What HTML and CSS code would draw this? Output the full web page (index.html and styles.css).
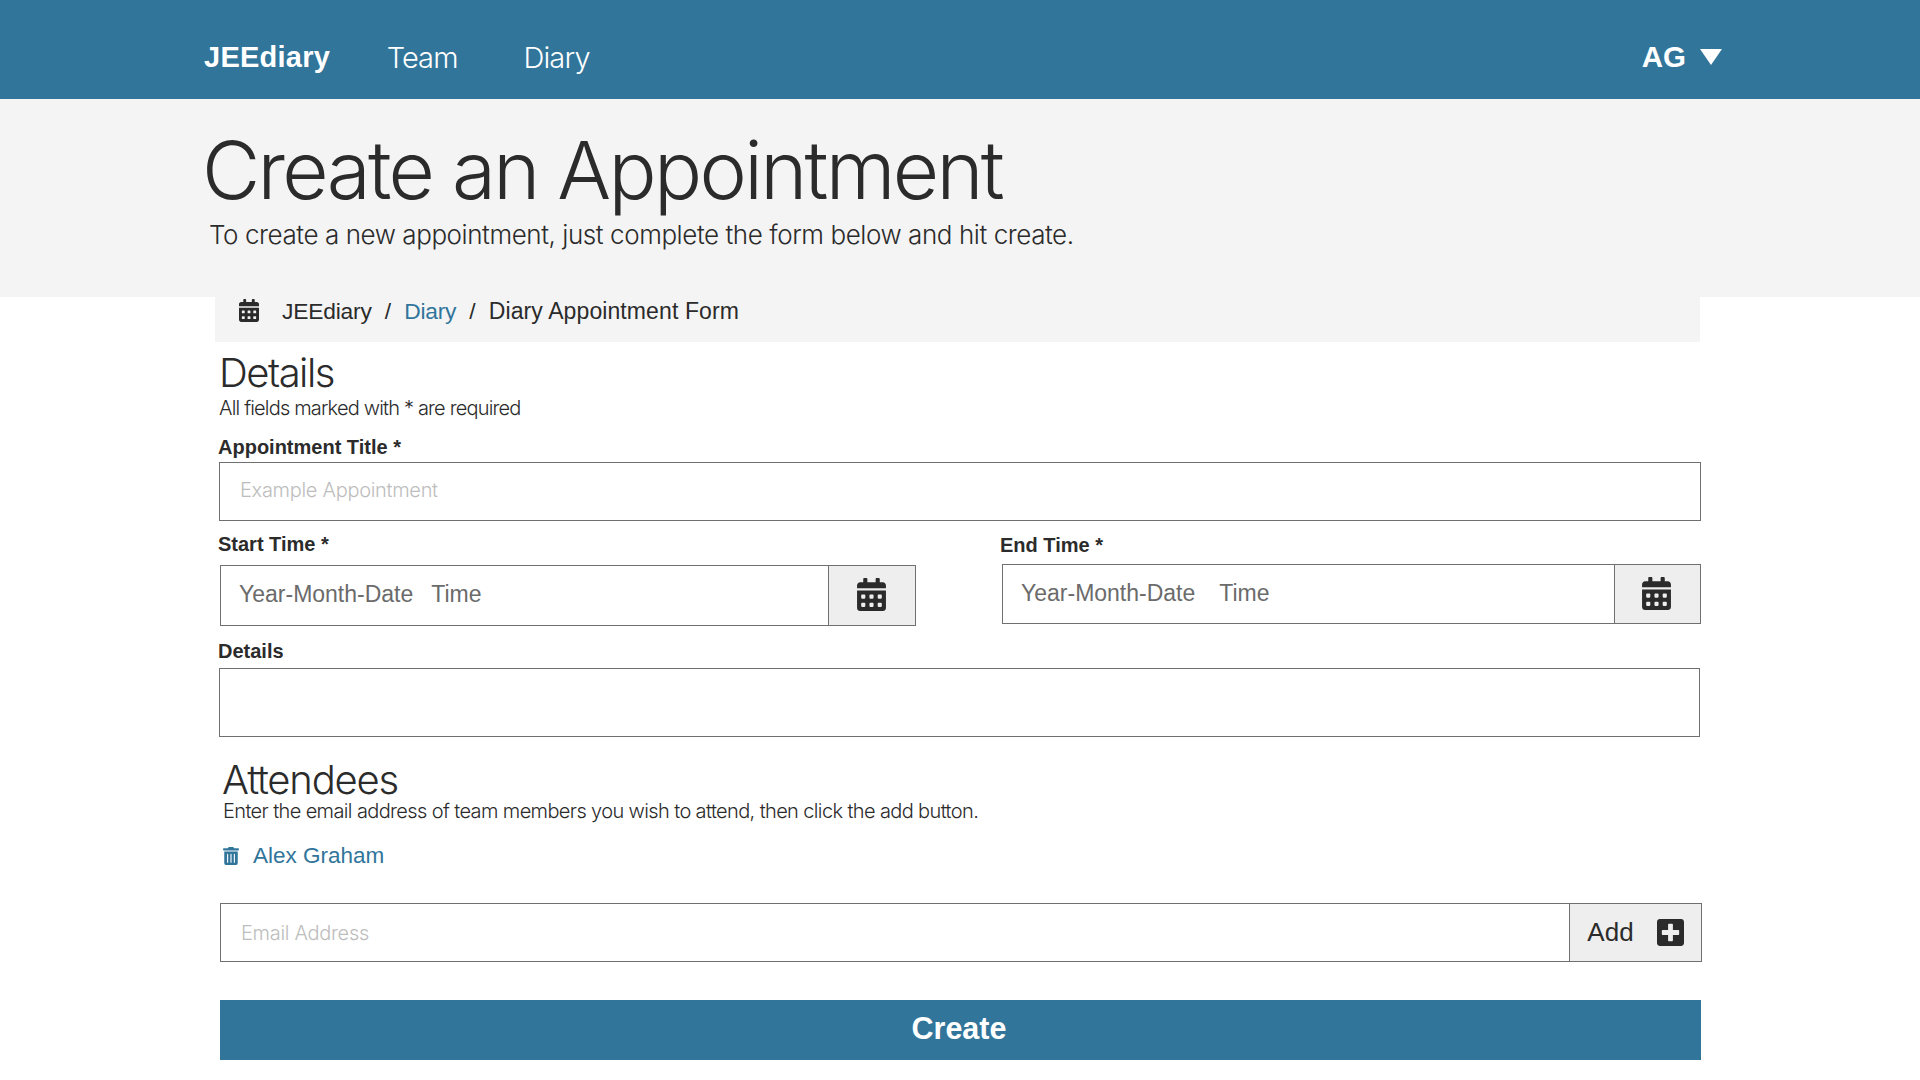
FILE: index.html
```html
<!DOCTYPE html>
<html lang="en">
<head>
<meta charset="utf-8">
<title>Create an Appointment</title>
<link rel="stylesheet" href="styles.css">
</head>
<body>
<header class="topbar">
  <nav class="nav">
    <a class="brand">JEEdiary</a>
    <a class="nav-link">Team</a>
    <a class="nav-link">Diary</a>
  </nav>
  <div class="user"><span>AG</span><span class="caret"></span></div>
</header>
<section class="hero">
  <h1>Create an Appointment</h1>
  <p>To create a new appointment, just complete the form below and hit create.</p>
</section>
<nav class="crumbs">
  <svg class="crumb-icon" viewBox="0 0 448 512"><path d="M0 464c0 26.5 21.5 48 48 48h352c26.5 0 48-21.5 48-48V192H0v272zm320-196c0-6.6 5.4-12 12-12h40c6.6 0 12 5.4 12 12v40c0 6.6-5.4 12-12 12h-40c-6.6 0-12-5.4-12-12v-40zm0 128c0-6.6 5.4-12 12-12h40c6.6 0 12 5.4 12 12v40c0 6.6-5.4 12-12 12h-40c-6.6 0-12-5.4-12-12v-40zM192 268c0-6.6 5.4-12 12-12h40c6.6 0 12 5.4 12 12v40c0 6.6-5.4 12-12 12h-40c-6.6 0-12-5.4-12-12v-40zm0 128c0-6.6 5.4-12 12-12h40c6.6 0 12 5.4 12 12v40c0 6.6-5.4 12-12 12h-40c-6.6 0-12-5.4-12-12v-40zM64 268c0-6.6 5.4-12 12-12h40c6.6 0 12 5.4 12 12v40c0 6.6-5.4 12-12 12H76c-6.6 0-12-5.4-12-12v-40zm0 128c0-6.6 5.4-12 12-12h40c6.6 0 12 5.4 12 12v40c0 6.6-5.4 12-12 12H76c-6.6 0-12-5.4-12-12v-40zM400 64h-48V16c0-8.8-7.2-16-16-16h-32c-8.8 0-16 7.2-16 16v48H160V16c0-8.8-7.2-16-16-16h-32c-8.8 0-16 7.2-16 16v48H48C21.5 64 0 85.5 0 112v48h448v-48c0-26.5-21.5-48-48-48z"/></svg>
  <span class="crumb-root">JEEdiary</span><span class="sep">/</span><a class="link">Diary</a><span class="sep">/</span><span class="crumb-current">Diary Appointment Form</span>
</nav>
<main class="form">
  <h2 class="section-title">Details</h2>
  <p class="section-note details-note">All fields marked with * are required</p>
  <label class="field-label label-title">Appointment Title *</label>
  <input class="text-input input-title" placeholder="Example Appointment">
  <div class="time-row">
    <div class="time-col start-col">
      <label class="field-label">Start Time *</label>
      <div class="group start-group">
        <div class="time-value"><span>Year-Month-Date</span><span class="time-word start-word">Time</span></div>
        <div class="addon cal-addon start-addon">
          <svg class="cal-icon" viewBox="0 0 448 512"><path d="M0 464c0 26.5 21.5 48 48 48h352c26.5 0 48-21.5 48-48V192H0v272zm320-196c0-6.6 5.4-12 12-12h40c6.6 0 12 5.4 12 12v40c0 6.6-5.4 12-12 12h-40c-6.6 0-12-5.4-12-12v-40zm0 128c0-6.6 5.4-12 12-12h40c6.6 0 12 5.4 12 12v40c0 6.6-5.4 12-12 12h-40c-6.6 0-12-5.4-12-12v-40zM192 268c0-6.6 5.4-12 12-12h40c6.6 0 12 5.4 12 12v40c0 6.6-5.4 12-12 12h-40c-6.6 0-12-5.4-12-12v-40zm0 128c0-6.6 5.4-12 12-12h40c6.6 0 12 5.4 12 12v40c0 6.6-5.4 12-12 12h-40c-6.6 0-12-5.4-12-12v-40zM64 268c0-6.6 5.4-12 12-12h40c6.6 0 12 5.4 12 12v40c0 6.6-5.4 12-12 12H76c-6.6 0-12-5.4-12-12v-40zm0 128c0-6.6 5.4-12 12-12h40c6.6 0 12 5.4 12 12v40c0 6.6-5.4 12-12 12H76c-6.6 0-12-5.4-12-12v-40zM400 64h-48V16c0-8.8-7.2-16-16-16h-32c-8.8 0-16 7.2-16 16v48H160V16c0-8.8-7.2-16-16-16h-32c-8.8 0-16 7.2-16 16v48H48C21.5 64 0 85.5 0 112v48h448v-48c0-26.5-21.5-48-48-48z"/></svg>
        </div>
      </div>
    </div>
    <div class="time-col end-col">
      <label class="field-label">End Time *</label>
      <div class="group end-group">
        <div class="time-value"><span>Year-Month-Date</span><span class="time-word end-word">Time</span></div>
        <div class="addon cal-addon end-addon">
          <svg class="cal-icon" viewBox="0 0 448 512"><path d="M0 464c0 26.5 21.5 48 48 48h352c26.5 0 48-21.5 48-48V192H0v272zm320-196c0-6.6 5.4-12 12-12h40c6.6 0 12 5.4 12 12v40c0 6.6-5.4 12-12 12h-40c-6.6 0-12-5.4-12-12v-40zm0 128c0-6.6 5.4-12 12-12h40c6.6 0 12 5.4 12 12v40c0 6.6-5.4 12-12 12h-40c-6.6 0-12-5.4-12-12v-40zM192 268c0-6.6 5.4-12 12-12h40c6.6 0 12 5.4 12 12v40c0 6.6-5.4 12-12 12h-40c-6.6 0-12-5.4-12-12v-40zm0 128c0-6.6 5.4-12 12-12h40c6.6 0 12 5.4 12 12v40c0 6.6-5.4 12-12 12h-40c-6.6 0-12-5.4-12-12v-40zM64 268c0-6.6 5.4-12 12-12h40c6.6 0 12 5.4 12 12v40c0 6.6-5.4 12-12 12H76c-6.6 0-12-5.4-12-12v-40zm0 128c0-6.6 5.4-12 12-12h40c6.6 0 12 5.4 12 12v40c0 6.6-5.4 12-12 12H76c-6.6 0-12-5.4-12-12v-40zM400 64h-48V16c0-8.8-7.2-16-16-16h-32c-8.8 0-16 7.2-16 16v48H160V16c0-8.8-7.2-16-16-16h-32c-8.8 0-16 7.2-16 16v48H48C21.5 64 0 85.5 0 112v48h448v-48c0-26.5-21.5-48-48-48z"/></svg>
        </div>
      </div>
    </div>
  </div>
  <label class="field-label label-details">Details</label>
  <textarea class="text-input details-box"></textarea>
  <h2 class="section-title attendees-title">Attendees</h2>
  <p class="section-note attendees-note">Enter the email address of team members you wish to attend, then click the add button.</p>
  <a class="attendee">
    <svg class="trash-icon" viewBox="0 0 448 512"><path d="M32 464a48 48 0 0 0 48 48h288a48 48 0 0 0 48-48V128H32zm272-256a16 16 0 0 1 32 0v224a16 16 0 0 1-32 0zm-96 0a16 16 0 0 1 32 0v224a16 16 0 0 1-32 0zm-96 0a16 16 0 0 1 32 0v224a16 16 0 0 1-32 0zM432 32H312l-9.4-18.7A24 24 0 0 0 281.1 0H166.8a23.72 23.72 0 0 0-21.4 13.3L136 32H16A16 16 0 0 0 0 48v32a16 16 0 0 0 16 16h416a16 16 0 0 0 16-16V48a16 16 0 0 0-16-16z"/></svg>
    <span>Alex Graham</span>
  </a>
  <div class="group email-group">
    <input class="email-input" placeholder="Email Address">
    <div class="addon add-addon">
      <span>Add</span>
      <svg class="plus-icon" viewBox="0 0 448 512"><path d="M400 32H48C21.5 32 0 53.5 0 80v352c0 26.5 21.5 48 48 48h352c26.5 0 48-21.5 48-48V80c0-26.5-21.5-48-48-48zm-32 252c0 6.6-5.4 12-12 12h-92v92c0 6.6-5.4 12-12 12h-56c-6.6 0-12-5.4-12-12v-92H92c-6.6 0-12-5.4-12-12v-56c0-6.6 5.4-12 12-12h92v-92c0-6.6 5.4-12 12-12h56c6.6 0 12 5.4 12 12v92h92c6.6 0 12 5.4 12 12v56z"/></svg>
    </div>
  </div>
  <button class="create">Create</button>
</main>
</body>
</html>
```
FILE: styles.css
```css
* { box-sizing: border-box; }
html, body { margin: 0; }
body {
  font-family: "Liberation Sans", Arial, sans-serif;
  color: #2b2b2b;
  background: #fff;
  height: 1080px;
  overflow: hidden;
}
.topbar {
  height: 99px;
  background: #31759b;
  color: #fff;
  display: flex;
  justify-content: space-between;
  padding: 16px 198px 0 204px;
}
.nav { display: flex; align-items: center; height: 83px; }
.brand { font-size: 29px; font-weight: 700; margin-right: 56.5px; letter-spacing: 0.25px; }
.nav-link { font-family: Inter, sans-serif; font-weight: 300; font-size: 29px; letter-spacing: -0.9px; margin-right: 66px; }
.user { display: flex; align-items: center; height: 82px; font-size: 29.5px; font-weight: 700; gap: 14px; }
.caret {
  width: 0; height: 0;
  border-left: 11px solid transparent;
  border-right: 11px solid transparent;
  border-top: 16px solid #fff;
}
.hero {
  height: 198px;
  background: #f4f4f4;
  padding: 26px 0 0 202px;
}
.hero h1 {
  margin: 0;
  font-family: Inter, sans-serif;
  font-weight: 270;
  font-size: 80px;
  letter-spacing: -2.7px;
  line-height: 90px;
}
.hero p {
  margin: 4px 0 0 7px;
  font-family: Inter, sans-serif;
  font-weight: 300;
  font-size: 26px;
  letter-spacing: -0.43px;
  line-height: 32px;
}
.crumbs {
  margin-left: 215px;
  width: 1485px;
  height: 45px;
  background: #f4f4f4;
  padding: 0 0 17px 24px;
  display: flex;
  align-items: center;
  font-size: 22.8px;
}
.crumb-icon { width: 20px; height: 23px; margin: 0 23px 2px 0; fill: #2b2b2b; }
.crumb-root { letter-spacing: -0.2px; }
.crumb-current { font-size: 23px; letter-spacing: 0.1px; }
.sep { margin: 0 13.2px; }
.link { color: #31759b; letter-spacing: -0.3px; }
.form { margin-left: 219px; width: 1482px; }
.section-title {
  margin: 7px 0 0;
  font-family: Inter, sans-serif;
  font-weight: 300;
  font-size: 40px;
  letter-spacing: -1.5px;
  line-height: 48px;
}
.section-note {
  margin: 0 0 0 1px;
  font-family: Inter, sans-serif;
  font-weight: 300;
  font-size: 20px;
  letter-spacing: -0.6px;
  line-height: 23px;
}
.details-note { letter-spacing: -0.82px; margin-left: 0; }
.field-label {
  display: block;
  font-size: 20px;
  font-weight: 700;
  line-height: 24px;
  margin-left: -1px;
}
.label-title { margin-top: 15px; margin-bottom: 3px; }
.text-input {
  display: block;
  width: 100%;
  border: 1.5px solid #707070;
  border-radius: 0;
  background: #fff;
  outline: none;
  font-family: Inter, sans-serif;
  font-weight: 300;
  font-size: 20px;
  letter-spacing: -0.3px;
  padding: 0 20px;
  resize: none;
}
.input-title { height: 59px; padding-bottom: 4px; }
.text-input::placeholder, .email-input::placeholder { color: #bdbdbd; opacity: 1; }
.time-row { display: flex; justify-content: space-between; margin-top: 11px; }
.start-col { width: 696px; margin-left: 1px; }
.end-col { width: 699px; margin-top: 1px; }
.start-col .field-label { margin-left: -2px; }
.end-col .field-label { margin-left: -2px; }
.group {
  display: flex;
  border: 1.5px solid #707070;
  background: #fff;
}
.start-group { height: 61px; margin-top: 9px; }
.end-group { height: 60px; margin-top: 7px; }
.time-value {
  flex: 1;
  display: flex;
  align-items: center;
  padding-left: 18px;
  padding-bottom: 2px;
  font-size: 23px;
  color: #6b6b6b;
}
.time-word { margin-left: 18px; }
.end-word { margin-left: 24px; }
.addon {
  background: #eee;
  border-left: 1.5px solid #707070;
  display: flex;
  align-items: center;
  justify-content: center;
}
.cal-addon { width: 87px; padding: 0 2px 2px 0; }
.end-addon { width: 86px; padding-right: 3px; }
.cal-icon { width: 29px; height: 33px; fill: #2b2b2b; }
.label-details { margin-top: 13px; }
.details-box { height: 69px; width: 1481px; margin-top: 5px; }
.attendees-title { margin: 22px 0 0 3px; line-height: 41px; letter-spacing: -1.2px; }
.attendees-note { margin-left: 4px; letter-spacing: -0.62px; }
.attendee {
  display: flex;
  align-items: center;
  margin: 19px 0 0 4px;
  color: #31759b;
  font-size: 22.5px;
  line-height: 28px;
}
.trash-icon { width: 16px; height: 18px; fill: #31759b; margin-right: 14px; }
.email-group { height: 59px; width: 1482px; margin: 33px 0 0 1px; }
.email-input {
  flex: 1;
  min-width: 0;
  border: 0;
  outline: none;
  background: #fff;
  font-family: Inter, sans-serif;
  font-weight: 300;
  font-size: 20px;
  letter-spacing: -0.3px;
  padding: 0 20px;
}
.add-addon { width: 132px; font-size: 26px; gap: 23px; }
.plus-icon { width: 27px; height: 31px; fill: #2b2b2b; }
.create {
  display: block;
  width: 1481px;
  height: 60px;
  margin: 38px 0 0 1px;
  padding: 0 3px 3px 0;
  border: 0;
  background: #31759b;
  color: #fff;
  font-family: "Liberation Sans", Arial, sans-serif;
  font-size: 30.5px;
  font-weight: 700;
}
```
